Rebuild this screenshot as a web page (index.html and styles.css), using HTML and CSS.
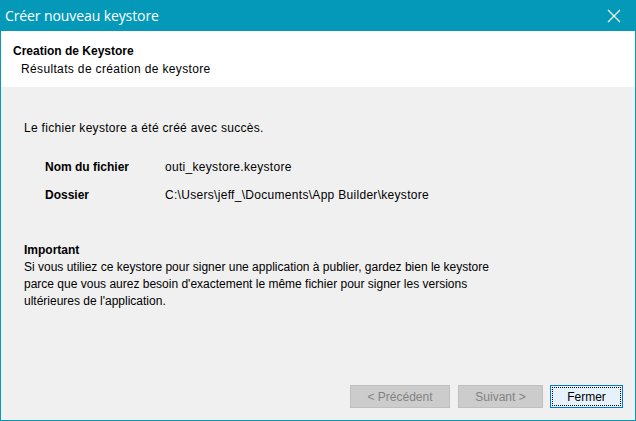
FILE: index.html
```html
<!DOCTYPE html>
<html lang="fr">
<head>
    <meta charset="UTF-8">
    <title>Créer nouveau keystore</title>
    <link rel="stylesheet" href="styles.css">
</head>
<body>
    <div class="window">
        <div class="titlebar">
            <span class="title">Créer nouveau keystore</span>
            <svg class="close" width="14" height="14" viewBox="0 0 14 14">
                <path d="M1 1 L13 13 M13 1 L1 13" stroke="#ffffff" stroke-width="1.1" fill="none"/>
            </svg>
        </div>

        <div class="header">
            <h1>Creation de Keystore</h1>
            <p>Résultats de création de keystore</p>
        </div>

        <div class="content">
            <p class="message">Le fichier keystore a été créé avec succès.</p>

            <div class="details">
                <span class="label">Nom du fichier</span>
                <span class="value">outi_keystore.keystore</span>
                <span class="label">Dossier</span>
                <span class="value">C:\Users\jeff_\Documents\App Builder\keystore</span>
            </div>

            <div class="important">
                <h2>Important</h2>
                <p>Si vous utiliez ce keystore pour signer une application à publier, gardez bien le keystore<br>
                parce que vous aurez besoin d'exactement le même fichier pour signer les versions<br>
                ultérieures de l'application.</p>
            </div>
        </div>

        <div class="buttons">
            <button class="btn prev" disabled>&lt; Précédent</button>
            <button class="btn next" disabled>Suivant &gt;</button>
            <button class="btn primary">Fermer</button>
        </div>
    </div>
</body>
</html>
```

FILE: styles.css
```css
:root {
    --accent: #0499b9;
    --face: #f0f0f0;
    --text: #000000;
}

html, body {
    margin: 0;
    padding: 0;
    height: 100%;
}

body {
    font-family: "Liberation Sans", Arial, sans-serif;
    font-size: 12px;
    color: var(--text);
    background: var(--face);
}

.window {
    box-sizing: border-box;
    width: 636px;
    height: 421px;
    display: flex;
    flex-direction: column;
    border: 1px solid var(--accent);
    border-top: none;
    background: var(--face);
}

.titlebar {
    height: 31px;
    flex: none;
    margin: 0 -1px;
    background: var(--accent);
    display: flex;
    align-items: center;
    justify-content: space-between;
    padding: 0 15px 0 5px;
}

.title {
    color: #ffffff;
    font-family: "Open Sans", "Noto Sans", sans-serif;
    font-size: 14px;
    letter-spacing: -0.1px;
    margin-top: -1px;
}

.close {
    display: block;
}

.header {
    height: 56px;
    flex: none;
    background: #ffffff;
    box-sizing: border-box;
    padding: 12px 0 0 12px;
}

.header h1 {
    margin: 0;
    font-size: 12px;
    font-weight: bold;
    line-height: 16px;
}

.header p {
    margin: 2px 0 0 8px;
    line-height: 16px;
    letter-spacing: 0.35px;
}

.content {
    flex: 1;
    padding: 33px 0 0 23px;
}

.message {
    margin: 0;
    line-height: 16px;
    letter-spacing: 0.3px;
}

.details {
    display: grid;
    grid-template-columns: 120px auto;
    row-gap: 12px;
    margin: 23px 0 0 21px;
    line-height: 16px;
}

.label {
    font-weight: bold;
}

.value {
    letter-spacing: 0.3px;
}

.important {
    margin-top: 39px;
}

.important h2 {
    margin: 0;
    font-size: 12px;
    line-height: 17px;
}

.important p {
    margin: 0;
    line-height: 17px;
}

.buttons {
    display: flex;
    justify-content: flex-end;
    gap: 8px;
    padding: 0 12px 12px 0;
}

.btn {
    font-family: "Liberation Sans", Arial, sans-serif;
    font-size: 12px;
    height: 23px;
    padding: 0;
    background: #e1e1e1;
    border: 1px solid #adadad;
    color: #000000;
}

.btn.prev {
    width: 100px;
}

.btn.next {
    width: 85px;
    margin-right: -1px;
}

.btn:disabled {
    background: #cccccc;
    border-color: #bfbfbf;
    color: #838383;
}

.btn.primary {
    width: 73px;
    border: 1px solid #0078d7;
    background: #e5f1fb;
    outline: 1px dotted #000000;
    outline-offset: -3px;
}
```
